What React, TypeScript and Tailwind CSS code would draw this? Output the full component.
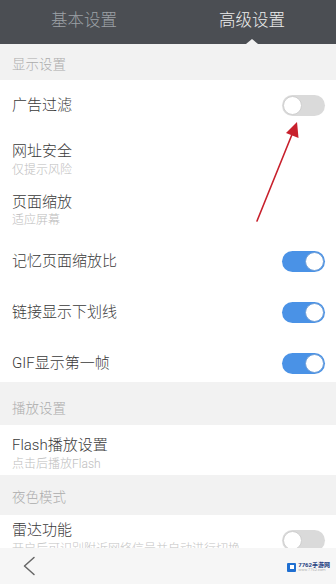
import React from "react";

const font = { fontFamily: '"Roboto", "Noto Sans CJK SC", sans-serif' };

function Toggle({ on }: { on: boolean }) {
  return on ? (
    <div className="w-[43px] h-[21px] rounded-full bg-[#4a92e6] flex items-center justify-end pr-[1px] shrink-0">
      <div className="w-[19px] h-[19px] rounded-full bg-white border border-[#6f9fd8]" />
    </div>
  ) : (
    <div className="w-[43px] h-[21px] rounded-full bg-[#dadada] flex items-center justify-start pl-[1px] shrink-0">
      <div className="w-[19px] h-[19px] rounded-full bg-white border border-[#cfcfcf]" />
    </div>
  );
}

function Section({ label, cls }: { label: string; cls: string }) {
  return (
    <div className={`bg-[#f2f2f2] px-[12px] text-[13.5px] leading-[20px] text-[#acacac] ${cls}`}>
      {label}
    </div>
  );
}

export default function App() {
  return (
    <div style={font} className="w-[336px] h-[584px] flex flex-col overflow-hidden bg-white font-light">
      {/* Tabs */}
      <div className="h-[44px] bg-[#4b4e53] flex shrink-0">
        <div className="flex-1 flex items-center justify-center text-[16.5px] text-[#9da1a6] pb-[1px]">
          基本设置
        </div>
        <div className="flex-1 relative flex items-center justify-center text-[16.5px] text-[#ececec] pb-[1px]">
          高级设置
          <div className="absolute bottom-0 left-1/2 -translate-x-1/2 w-0 h-0 border-l-[6px] border-r-[6px] border-b-[5px] border-l-transparent border-r-transparent border-b-[#f2f2f2]" />
        </div>
      </div>

      {/* Content */}
      <div className="flex-1 overflow-hidden relative">
        <Section label="显示设置" cls="h-[36px] pt-[10px]" />
        <div className="h-[50px] flex items-center justify-between pl-[12px] pr-[11px] text-[15px] text-[#3a3a3a]">
          <span>广告过滤</span>
          <Toggle on={false} />
        </div>
        <div className="h-[52px] pl-[12px] pt-[11px]">
          <div className="text-[15px] leading-[20px] text-[#3a3a3a]">网址安全</div>
          <div className="text-[12px] leading-[16px] text-[#bdbdbd] mt-[1px]">仅提示风险</div>
        </div>
        <div className="h-[54px] pl-[12px] pt-[10px]">
          <div className="text-[15px] leading-[20px] text-[#3a3a3a]">页面缩放</div>
          <div className="text-[12px] leading-[16px] text-[#bdbdbd]">适应屏幕</div>
        </div>
        <div className="h-[51px] flex items-center justify-between pl-[12px] pr-[11px] text-[15px] text-[#3a3a3a]">
          <span>记忆页面缩放比</span>
          <Toggle on />
        </div>
        <div className="h-[51px] flex items-center justify-between pl-[12px] pr-[11px] text-[15px] text-[#3a3a3a]">
          <span>链接显示下划线</span>
          <Toggle on />
        </div>
        <div className="h-[44px] flex items-center justify-between pl-[12px] pr-[11px] pt-[6px] text-[15px] text-[#3a3a3a]">
          <span>GIF显示第一帧</span>
          <Toggle on />
        </div>
        <Section label="播放设置" cls="h-[43px] pt-[16px]" />
        <div className="h-[50px] pl-[12px] pt-[10px]">
          <div className="text-[15px] leading-[20px] text-[#3a3a3a]">Flash播放设置</div>
          <div className="text-[12px] leading-[16px] text-[#bdbdbd] mt-[1px]">点击后播放Flash</div>
        </div>
        <Section label="夜色模式" cls="h-[40px] pt-[12px]" />
        <div className="h-[50px] flex items-start justify-between pl-[12px] pr-[11px] pt-[5px]">
          <div>
            <div className="text-[15px] leading-[20px] text-[#3a3a3a]">雷达功能</div>
            <div className="text-[12px] leading-[16px] text-[#c4c4c4] mt-[1px]">开启后可识别附近网络信号并自动进行切换</div>
          </div>
          <div className="mt-[10px]">
            <Toggle on={false} />
          </div>
        </div>

        {/* red annotation arrow */}
        <svg className="absolute left-0 top-0 pointer-events-none" width="336" height="504" viewBox="0 44 336 504">
          <line x1="257" y1="221" x2="293" y2="132" stroke="#c8202c" strokeWidth="1.6" strokeLinecap="round" />
          <polygon points="297,122 298.5,138 286,133" fill="#c8202c" />
        </svg>
      </div>

      {/* Bottom bar */}
      <div className="h-[36px] bg-[#f6f6f6] shrink-0 flex items-center justify-between pl-[22px] pr-[6px]">
        <svg width="14" height="20" viewBox="0 0 14 20">
          <polyline points="12,1.5 2.5,10 12,18.5" fill="none" stroke="#666" strokeWidth="1.5" strokeLinejoin="round" strokeLinecap="round" />
        </svg>
        <div className="flex items-center gap-[2px] mt-[2px]">
          <div className="w-[9px] h-[9px] bg-[#1f6fd1] rounded-[1px] flex items-center justify-center">
            <div className="w-[4px] h-[4px] bg-white" />
          </div>
          <div className="flex flex-col leading-none">
            <span className="text-[6px] text-[#1d3d80] font-bold">7762手游网</span>
            <span className="text-[4px] text-[#999]">www.7762.com</span>
          </div>
        </div>
      </div>
    </div>
  );
}
